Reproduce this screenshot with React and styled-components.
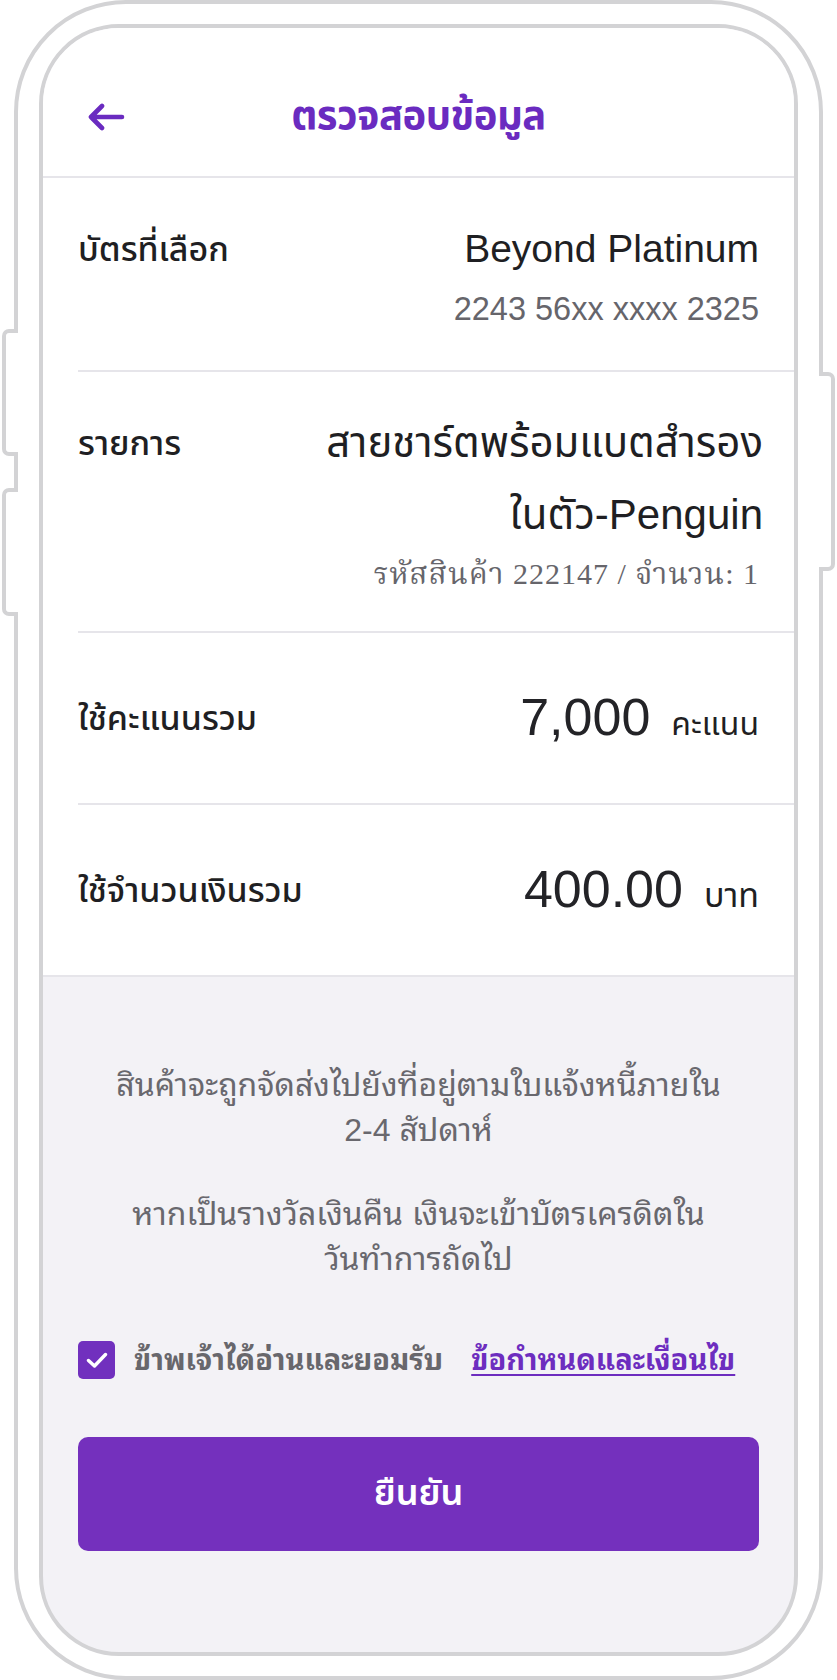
import * as React from "react";
import styled, { createGlobalStyle } from "styled-components";

const GlobalStyle = createGlobalStyle`
  body {
    margin: 0;
    background: #fff;
    font-family: "Liberation Sans", "Noto Sans Thai", "Noto Sans", sans-serif;
    color: #222226;
  }
`;

const frameGrey = "#d3d3d5";
const purple = "#7130be";
const loopedStack = '"Liberation Sans", "Noto Sans Thai Looped", "Noto Sans Thai", sans-serif';

const Device = styled.div`
  position: relative;
  width: 837px;
  height: 1680px;
`;

const Shell = styled.div`
  box-sizing: border-box;
  margin-left: 14px;
  width: 809px;
  height: 1680px;
  padding: 20px 21px;
  border: 4px solid ${frameGrey};
  border-radius: 112px;
  background: #fff;
`;

const SideKey = styled.div`
  position: absolute;
  top: ${({ top }) => top}px;
  height: ${({ h }) => h}px;
  width: 16px;
  box-sizing: border-box;
  background: #fff;
  border: 4px solid ${frameGrey};
  ${({ right }) =>
    right
      ? "left: 819px; border-left: none; border-radius: 0 7px 7px 0;"
      : "left: 2px; border-right: none; border-radius: 7px 0 0 7px;"}
`;

const Screen = styled.div`
  box-sizing: border-box;
  width: 759px;
  height: 1632px;
  border: 4px solid ${frameGrey};
  border-radius: 80px;
  overflow: hidden;
  display: flex;
  flex-direction: column;
  background: #f3f2f6;
`;

const Header = styled.header`
  box-sizing: border-box;
  height: 150px;
  padding-top: 30px;
  background: #fff;
  border-bottom: 2px solid #e6e5ea;
`;

const NavBar = styled.div`
  height: 118px;
  display: grid;
  grid-template-columns: 1fr auto 1fr;
  align-items: center;
`;

const BackButton = styled.button`
  justify-self: start;
  margin-left: 44px;
  padding: 0;
  border: none;
  background: none;
  display: flex;
  cursor: pointer;
`;

const Title = styled.h1`
  margin: 0;
  font-size: 40px;
  font-weight: 700;
  color: #6a2bc0;
  letter-spacing: -0.5px;
`;

const Details = styled.section`
  background: #fff;
  border-bottom: 2px solid #e6e5ea;
`;

const Row = styled.div`
  margin-left: 35px;
  padding: ${({ total }) => (total ? "0 35px 0 0" : "35px 35px 37px 0")};
  height: ${({ total }) => (total ? "170px" : "auto")};
  display: flex;
  justify-content: space-between;
  align-items: ${({ total }) => (total ? "center" : "flex-start")};
  border-bottom: ${({ last }) => (last ? "none" : "2px solid #e6e5ea")};
`;

const Label = styled.div`
  font-size: 34px;
  font-weight: 500;
  line-height: 72px;
  white-space: nowrap;
  color: #1f1f23;
`;

const Value = styled.div`
  text-align: right;
`;

const ValueLine = styled.div`
  font-size: ${({ big }) => (big ? "42px" : "39px")};
  line-height: 72px;
  color: #1f1f23;
  margin-right: ${({ big }) => (big ? "-4px" : "0")};
`;

const SubLine = styled.div`
  font-size: ${({ serif }) => (serif ? "30px" : "32.5px")};
  line-height: ${({ serif }) => (serif ? "41px" : "48px")};
  margin-top: ${({ serif }) => (serif ? "2px" : "0")};
  letter-spacing: ${({ serif }) => (serif ? "1px" : "0")};
  color: #66656b;
  font-family: ${({ serif }) =>
    serif ? '"Liberation Serif", "Noto Serif Thai", serif' : "inherit"};
`;

const Amount = styled.div`
  display: flex;
  align-items: baseline;
  gap: 21px;
`;

const Figure = styled.span`
  font-size: 52px;
  color: #232327;
`;

const Unit = styled.span`
  font-size: ${({ wide }) => (wide ? "34px" : "32px")};
  color: #1f1f23;
`;

const Footer = styled.section`
  flex: 1;
  padding: 86px 35px 0;
  display: flex;
  flex-direction: column;
`;

const Note = styled.p`
  margin: 0 0 39px;
  text-align: center;
  font-family: ${loopedStack};
  font-size: 32px;
  line-height: 45px;
  color: #69686e;
`;

const Consent = styled.label`
  margin-top: 20px;
  height: 38px;
  display: flex;
  align-items: center;
  gap: 19px;
  font-family: ${loopedStack};
  font-size: 29px;
  line-height: 38px;
  font-weight: 700;
  color: #68676c;
  white-space: nowrap;
`;

const Box = styled.span`
  flex: none;
  width: 37px;
  height: 38px;
  border-radius: 5px;
  background: ${purple};
  display: flex;
  align-items: center;
  justify-content: center;
`;

const TermsLink = styled.a`
  margin-left: 9px;
  color: #6d2dbf;
  text-decoration: underline;
  text-underline-offset: 4px;
`;

const ConfirmButton = styled.button`
  margin-top: 58px;
  height: 114px;
  width: 100%;
  border: none;
  border-radius: 10px;
  background: #7430bd;
  color: #fff;
  font-family: inherit;
  font-size: 36px;
  font-weight: 600;
  cursor: pointer;
`;

const ArrowLeft = () => (
  <svg width="38" height="28" viewBox="0 0 38 28" fill="none">
    <path
      d="M35 14H4M15 3L4 14l11 11"
      stroke="#6a2bc0"
      strokeWidth="4.6"
      strokeLinecap="round"
      strokeLinejoin="round"
    />
  </svg>
);

const Check = () => (
  <svg width="22" height="16" viewBox="0 0 22 16" fill="none">
    <path
      d="M2.5 8.5l6 5.5L19.5 2.5"
      stroke="#fff"
      strokeWidth="3.4"
      strokeLinecap="round"
      strokeLinejoin="round"
    />
  </svg>
);

export default function App() {
  return (
    <Device>
      <GlobalStyle />
      <SideKey top={329} h={127} />
      <SideKey top={488} h={128} />
      <SideKey right top={372} h={199} />
      <Shell>
        <Screen>
          <Header>
            <NavBar>
              <BackButton aria-label="back">
                <ArrowLeft />
              </BackButton>
              <Title>ตรวจสอบข้อมูล</Title>
              <span />
            </NavBar>
          </Header>

          <Details>
            <Row>
              <Label>บัตรที่เลือก</Label>
              <Value>
                <ValueLine>Beyond Platinum</ValueLine>
                <SubLine>2243 56xx xxxx 2325</SubLine>
              </Value>
            </Row>
            <Row>
              <Label>รายการ</Label>
              <Value>
                <ValueLine big>สายชาร์ตพร้อมแบตสำรอง</ValueLine>
                <ValueLine big>ในตัว-Penguin</ValueLine>
                <SubLine serif>รหัสสินค้า 222147 / จำนวน: 1</SubLine>
              </Value>
            </Row>
            <Row total>
              <Label>ใช้คะแนนรวม</Label>
              <Amount>
                <Figure>7,000</Figure>
                <Unit>คะแนน</Unit>
              </Amount>
            </Row>
            <Row total last>
              <Label>ใช้จำนวนเงินรวม</Label>
              <Amount>
                <Figure>400.00</Figure>
                <Unit wide>บาท</Unit>
              </Amount>
            </Row>
          </Details>

          <Footer>
            <Note>
              สินค้าจะถูกจัดส่งไปยังที่อยู่ตามใบแจ้งหนี้ภายใน
              <br />
              2-4 สัปดาห์
            </Note>
            <Note>
              หากเป็นรางวัลเงินคืน เงินจะเข้าบัตรเครดิตใน
              <br />
              วันทำการถัดไป
            </Note>
            <Consent>
              <Box>
                <Check />
              </Box>
              ข้าพเจ้าได้อ่านและยอมรับ
              <TermsLink href="#">ข้อกำหนดและเงื่อนไข</TermsLink>
            </Consent>
            <ConfirmButton>ยืนยัน</ConfirmButton>
          </Footer>
        </Screen>
      </Shell>
    </Device>
  );
}
